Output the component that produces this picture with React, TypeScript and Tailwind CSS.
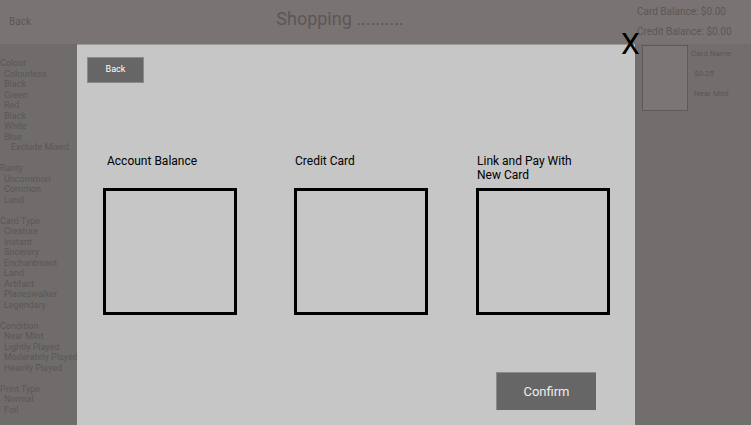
import React from "react";

const font = { fontFamily: "Roboto, 'Liberation Sans', sans-serif" };

function Group({ title, items, extra }: { title: string; items: string[]; extra?: string }) {
  return (
    <div className="mb-[10.5px] whitespace-nowrap">
      <div className="h-[10.5px] leading-[10.5px]">{title}</div>
      {items.map((i, k) => (
        <div key={k} className="h-[10.5px] leading-[10.5px] pl-[4px]">{i}</div>
      ))}
      {extra && <div className="h-[10.5px] leading-[10.5px] pl-[11px]">{extra}</div>}
    </div>
  );
}

function Option({ label, lp }: { label: React.ReactNode; lp: string }) {
  return (
    <div className="flex flex-col w-[134px]">
      <div className={`h-[34px] ${lp} text-[12px] leading-[14px] text-black`}>{label}</div>
      <div className="w-[134px] h-[127px] border-[3px] border-black" />
    </div>
  );
}

export default function App() {
  return (
    <div className="relative w-[751px] h-[425px] overflow-hidden bg-[#706c6b]" style={font}>
      <div className="flex h-[44px] bg-[#797473] text-[#5b5756]">
        <div className="w-[77px] pl-[9px] pt-[14px] text-[10px]">Back</div>
        <div className="flex-1 flex justify-center pt-[8px] text-[18px] leading-[22px] pr-[32px] whitespace-nowrap">Shopping ..........</div>
        <div className="w-[116px] pl-[2px] text-[10px] leading-[12px] whitespace-nowrap">
          <div className="pt-[6px]">Card Balance: $0.00</div>
          <div className="pt-[8px]">Credit Balance: $0.00</div>
        </div>
      </div>
      <div className="flex text-[#5b5756]">
        <div className="w-[77px] pt-[14px] text-[9px]">
          <Group title="Colour" items={["Colourless", "Black", "Green", "Red", "Black", "White", "Blue"]} extra="Exclude Mixed" />
          <Group title="Rarity" items={["Uncommon", "Common", "Land"]} />
          <Group title="Card Type" items={["Creature", "Instant", "Socerery", "Enchantment", "Land", "Artifact", "Planeswalker", "Legendary"]} />
          <Group title="Condition" items={["Near Mint", "Lightly Played", "Moderately Played", "Heavily Played"]} />
          <Group title="Print Type" items={["Normal", "Foil"]} />
        </div>
        <div className="flex-1" />
        <div className="w-[116px] flex pt-[1px] pl-[7px] text-[8px] bg-[#726e6d] whitespace-nowrap">
          <div className="w-[46px] h-[66px] border border-[#5e5a59] bg-[#7a7675] shrink-0" />
          <div className="pl-[3px] pt-[4px] leading-[10px]">
            <div>Card Name</div>
            <div className="pt-[10px] pl-[3px]">$0.25</div>
            <div className="pt-[10px] pl-[3px]">Near Mint</div>
          </div>
        </div>
      </div>

      <div className="absolute left-[77px] top-[44px] w-[558px] h-[381px] bg-[#c6c6c6] border-t border-[#9c9a99] flex flex-col">
        <div className="pl-[10px] pt-[10px]">
          <button className="w-[57px] h-[26px] bg-[#666666] border border-[#8a8a8a] text-white text-[9px]">Back</button>
        </div>
        <div className="flex pl-[26px] pt-[71px] gap-[57px]">
          <Option label="Account Balance" lp="pl-[4px]" />
          <div className="ml-[0px]"><Option label="Credit Card" lp="pl-[1px]" /></div>
          <div className="ml-[-9px]"><Option label={<>Link and Pay With<br />New Card</>} lp="pl-[1px]" /></div>
        </div>
        <div className="flex justify-end pr-[39px] pt-[57px]">
          <button className="w-[100px] h-[38px] bg-[#666666] border-t border-l border-[#8a8a8a] text-[#eeeeee] text-[13px]">Confirm</button>
        </div>
      </div>

      <div className="absolute left-[621px] top-[27px] text-[30px] leading-[34px] text-black">X</div>
    </div>
  );
}
